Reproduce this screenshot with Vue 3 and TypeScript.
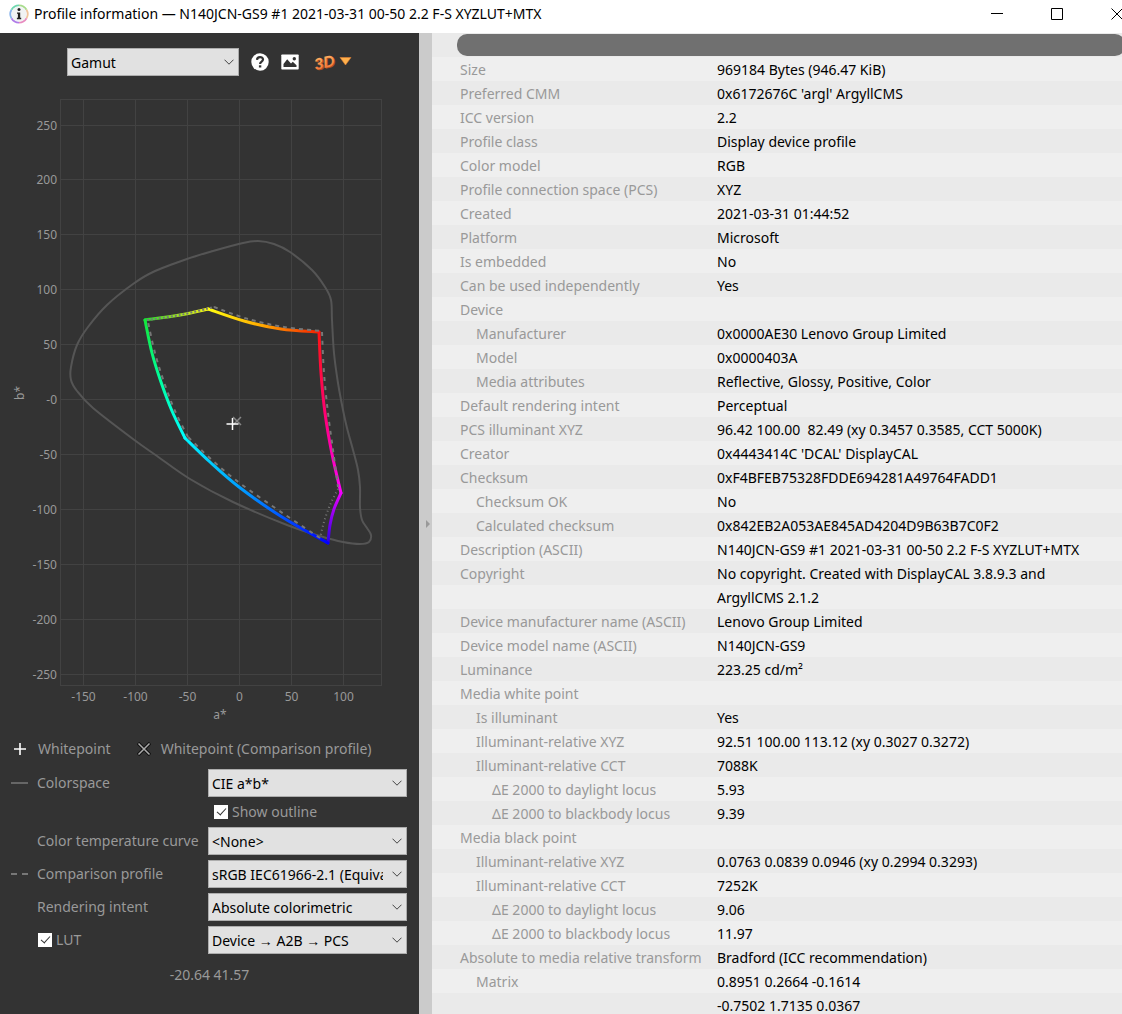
<script setup lang="ts">
import { ref } from 'vue'

type Point = [number, number]

interface Row {
  label: string
  value: string
  level?: number
}

const title = 'N140JCN-GS9 #1 2021-03-31 00-50 2.2 F-S XYZLUT+MTX'

const rows: Row[] = [
  { label: 'Size', value: '969184 Bytes (946.47 KiB)' },
  { label: 'Preferred CMM', value: "0x6172676C 'argl' ArgyllCMS" },
  { label: 'ICC version', value: '2.2' },
  { label: 'Profile class', value: 'Display device profile' },
  { label: 'Color model', value: 'RGB' },
  { label: 'Profile connection space (PCS)', value: 'XYZ' },
  { label: 'Created', value: '2021-03-31 01:44:52' },
  { label: 'Platform', value: 'Microsoft' },
  { label: 'Is embedded', value: 'No' },
  { label: 'Can be used independently', value: 'Yes' },
  { label: 'Device', value: '' },
  { label: 'Manufacturer', value: '0x0000AE30 Lenovo Group Limited', level: 1 },
  { label: 'Model', value: '0x0000403A', level: 1 },
  { label: 'Media attributes', value: 'Reflective, Glossy, Positive, Color', level: 1 },
  { label: 'Default rendering intent', value: 'Perceptual' },
  { label: 'PCS illuminant XYZ', value: '96.42 100.00  82.49 (xy 0.3457 0.3585, CCT 5000K)' },
  { label: 'Creator', value: "0x4443414C 'DCAL' DisplayCAL" },
  { label: 'Checksum', value: '0xF4BFEB75328FDDE694281A49764FADD1' },
  { label: 'Checksum OK', value: 'No', level: 1 },
  { label: 'Calculated checksum', value: '0x842EB2A053AE845AD4204D9B63B7C0F2', level: 1 },
  { label: 'Description (ASCII)', value: title },
  { label: 'Copyright', value: 'No copyright. Created with DisplayCAL 3.8.9.3 and ArgyllCMS 2.1.2' },
  { label: 'Device manufacturer name (ASCII)', value: 'Lenovo Group Limited' },
  { label: 'Device model name (ASCII)', value: 'N140JCN-GS9' },
  { label: 'Luminance', value: '223.25 cd/m²' },
  { label: 'Media white point', value: '' },
  { label: 'Is illuminant', value: 'Yes', level: 1 },
  { label: 'Illuminant-relative XYZ', value: '92.51 100.00 113.12 (xy 0.3027 0.3272)', level: 1 },
  { label: 'Illuminant-relative CCT', value: '7088K', level: 1 },
  { label: 'ΔE 2000 to daylight locus', value: '5.93', level: 2 },
  { label: 'ΔE 2000 to blackbody locus', value: '9.39', level: 2 },
  { label: 'Media black point', value: '' },
  { label: 'Illuminant-relative XYZ', value: '0.0763 0.0839 0.0946 (xy 0.2994 0.3293)', level: 1 },
  { label: 'Illuminant-relative CCT', value: '7252K', level: 1 },
  { label: 'ΔE 2000 to daylight locus', value: '9.06', level: 2 },
  { label: 'ΔE 2000 to blackbody locus', value: '11.97', level: 2 },
  { label: 'Absolute to media relative transform', value: 'Bradford (ICC recommendation)' },
  { label: 'Matrix', value: '0.8951 0.2664 -0.1614\n-0.7502 1.7135 0.0367', level: 1 },
]

// Axis ticks, mapped from a*b* values to plot coordinates.
const plot = { left: 60.5, right: 381.5, top: 99.5, bottom: 685.5 }
const xTicks = [-150, -100, -50, 0, 50, 100].map((v) => ({
  text: String(v),
  pos: Math.round(239 + v * 1.041) + 0.5,
}))
const yTicks = [250, 200, 150, 100, 50, 0, -50, -100, -150, -200, -250].map((v) => ({
  text: v === 0 ? '-0' : String(v),
  pos: Math.round(399 - v * 1.098) + 0.5,
}))

// Catmull-Rom spline through the given points.
function spline(p: Point[], closed = false): string {
  const n = p.length
  const at = (i: number): Point =>
    closed ? p[(i + n) % n] : p[Math.max(0, Math.min(n - 1, i))]
  let d = `M${p[0][0]} ${p[0][1]}`
  const count = closed ? n : n - 1
  for (let i = 0; i < count; i++) {
    const [a, b, c, e] = [at(i - 1), at(i), at(i + 1), at(i + 2)]
    d += ` C${b[0] + (c[0] - a[0]) / 6} ${b[1] + (c[1] - a[1]) / 6}`
    d += ` ${c[0] - (e[0] - b[0]) / 6} ${c[1] - (e[1] - b[1]) / 6} ${c[0]} ${c[1]}`
  }
  return closed ? d + 'Z' : d
}

const locus = spline(
  [
    [258, 241], [274, 244], [290, 252], [312, 270], [325, 287], [331, 300], [332, 320],
    [334, 353], [338, 383], [343, 410], [347, 428], [353, 450], [358, 470], [360, 487],
    [360, 507], [362, 520], [367, 528], [371, 535], [369, 542], [360, 544], [343, 542],
    [320, 536], [287, 525], [233, 502], [190, 479], [157, 456], [133, 439], [93, 408],
    [77, 391], [71, 380], [71, 367], [77, 345], [88, 327], [107, 305], [133, 284],
    [153, 272], [187, 259], [213, 251], [243, 243],
  ],
  true,
)

const edges = [
  { id: 'gy', pts: [[145, 320], [180, 315], [208, 309]], stops: ['#1fdc32', '#9be61e', '#f5f514'] },
  { id: 'yr', pts: [[208, 309], [244, 321], [281, 329], [319, 332]], stops: ['#ffff10', '#ffa800', '#f52000'] },
  { id: 'rm', pts: [[319, 332], [321, 373], [325, 413], [332, 454], [341, 493]], stops: ['#ff1414', '#ff0070', '#ff00ff'] },
  { id: 'mb', pts: [[341, 493], [334, 509], [330, 525], [328, 543]], stops: ['#f000ff', '#8a00f0', '#2a00e8'] },
  { id: 'bc', pts: [[328, 543], [282, 517], [239, 487], [210, 462], [185, 438]], stops: ['#0000ff', '#008cff', '#00f5ff'] },
  { id: 'cg', pts: [[185, 438], [172, 411], [161, 382], [152, 353], [145, 320]], stops: ['#00ffff', '#00ffa0', '#14e63c'] },
].map((e) => {
  const pts = e.pts as Point[]
  return { ...e, d: spline(pts), from: pts[0], to: pts[pts.length - 1] }
})

const comparison = [
  { dash: '2 2', d: spline([[147, 320], [180, 315], [214, 307]]) },
  { dash: '4 4', d: spline([[214, 307], [248, 319], [284, 327], [321, 331]]) },
  { dash: '4 5', d: spline([[322, 332], [324, 373], [328, 413], [333, 450], [338, 487]]) },
  { dash: '1 3', d: spline([[338, 489], [330, 505], [324, 522], [320, 538]]) },
  { dash: '4 5', d: spline([[320, 538], [284, 514], [241, 484], [213, 461], [188, 437]]) },
  { dash: '4 5', d: spline([[188, 437], [175, 411], [164, 382], [155, 353], [148, 322]]) },
]

const showOutline = ref(true)
const lut = ref(true)
</script>

<template>
  <div class="window">
    <header class="titlebar">
      <svg class="app-icon" width="20" height="20" viewBox="0 0 20 20" aria-hidden="true">
        <g fill="none" stroke-width="2">
          <path d="M10 1.400A8.600 8.600 0 0 1 17.450 5.700" stroke="#a8dc8c" />
          <path d="M17.450 5.700A8.600 8.600 0 0 1 17.450 14.300" stroke="#f0c49c" />
          <path d="M17.450 14.300A8.600 8.600 0 0 1 10 18.600" stroke="#e88cc0" />
          <path d="M10 18.600A8.600 8.600 0 0 1 2.550 14.300" stroke="#b07ce8" />
          <path d="M2.550 14.300A8.600 8.600 0 0 1 2.550 5.700" stroke="#88b4ec" />
          <path d="M2.550 5.700A8.600 8.600 0 0 1 10 1.400" stroke="#70d8b0" />
        </g>
        <circle cx="10" cy="10" r="7.700" fill="#f1f3f4" />
        <circle cx="10" cy="5.600" r="1.500" fill="#222" />
        <path d="M8 8.400h3.200v5.400h1v1.400H7.900v-1.400h1V9.800H8z" fill="#222" />
      </svg>
      <h1>Profile information — {{ title }}</h1>
      <div class="controls">
        <button type="button" aria-label="Minimize">
          <svg width="12" height="12" viewBox="0 0 12 12"><path d="M0 5.500h12" stroke="#000" /></svg>
        </button>
        <button type="button" aria-label="Maximize">
          <svg width="12" height="12" viewBox="0 0 12 12"><path d="M.5 .5h11v11H.5z" fill="none" stroke="#000" /></svg>
        </button>
        <button type="button" aria-label="Close">
          <svg width="12" height="12" viewBox="0 0 12 12"><path d="M.5 .5l11 11M11.500 .5l-11 11" stroke="#000" /></svg>
        </button>
      </div>
    </header>

    <main class="split">
      <section class="gamut">
        <div class="toolbar">
          <div class="combo view">
            <select aria-label="View"><option>Gamut</option></select>
            <svg width="10" height="6" viewBox="0 0 10 6"><path d="M.5 .7L5 5.200L9.500 .7" /></svg>
          </div>
          <button type="button" aria-label="Help">
            <svg width="18" height="18" viewBox="0 0 18 18">
              <circle cx="9" cy="9" r="8.700" fill="#fff" />
              <path d="M6 6.900C6.100 3.200 12 3.200 12 6.600C12 8.700 9.100 8.700 9.100 11" fill="none" stroke="#333" stroke-width="2.200" />
              <path d="M7.900 12.300h2.400v2.200H7.900z" fill="#333" />
            </svg>
          </button>
          <button type="button" aria-label="Save as image">
            <svg width="18" height="16" viewBox="0 0 18 16">
              <path d="M1 .5h16q.7 0 .7.7v13.600q0 .7-.7.7H1q-.7 0-.7-.7V1.200Q.3.500 1 .5z" fill="#fff" />
              <path d="M2.500 13V10L6.200 5.300L10 9.600L11.800 7.800L15.500 11.200V13z" fill="#333" />
              <circle cx="13.300" cy="4.700" r="1.700" fill="#333" />
            </svg>
          </button>
          <button type="button" class="three-d" aria-label="View 3D gamut">
            <svg width="38" height="24" viewBox="0 0 38 24">
              <defs>
                <linearGradient id="amber" x1="0" y1="0" x2="0" y2="1">
                  <stop offset="0" stop-color="#ffb868" />
                  <stop offset="1" stop-color="#f06c34" />
                </linearGradient>
              </defs>
              <g transform="rotate(-12 10 12)" class="logo">
                <text x="1" y="19" fill="#a8501f">3D</text>
                <text x="0" y="18" fill="url(#amber)">3D</text>
              </g>
              <path d="M26 7.500h11l-5.500 7.500z" fill="#ffb04c" stroke="#e07f30" stroke-width=".6" />
            </svg>
          </button>
        </div>

        <svg class="chart" viewBox="0 76 419 657" role="img" aria-label="Gamut plot, CIE a*b*">
          <defs>
            <linearGradient
              v-for="e in edges" :id="e.id" :key="e.id" gradientUnits="userSpaceOnUse"
              :x1="e.from[0]" :y1="e.from[1]" :x2="e.to[0]" :y2="e.to[1]"
            >
              <stop v-for="(s, i) in e.stops" :key="i" :offset="i / 2" :stop-color="s" />
            </linearGradient>
          </defs>

          <g class="grid">
            <rect
              :x="plot.left" :y="plot.top"
              :width="plot.right - plot.left" :height="plot.bottom - plot.top"
            />
            <path v-for="t in xTicks" :key="t.text" :d="`M${t.pos} ${plot.top}V${plot.bottom}`" />
            <path v-for="t in yTicks" :key="t.text" :d="`M${plot.left} ${t.pos}H${plot.right}`" />
          </g>

          <g class="ticks">
            <text v-for="t in yTicks" :key="t.text" x="57" :y="t.pos + 4" text-anchor="end">{{ t.text }}</text>
            <text v-for="t in xTicks" :key="t.text" :x="t.pos" y="701" text-anchor="middle">{{ t.text }}</text>
            <text x="220" y="719" text-anchor="middle">a*</text>
            <text transform="translate(24 393) rotate(-90)" text-anchor="middle">b*</text>
          </g>

          <path v-if="showOutline" class="locus" :d="locus" />
          <path v-for="e in edges" :key="e.id" class="edge" :d="e.d" :stroke="`url(#${e.id})`" />
          <path
            v-for="(c, i) in comparison" :key="i" class="comparison"
            :d="c.d" :stroke-dasharray="c.dash"
          />
          <path d="M233 417l8 8M241 417l-8 8" stroke="#888" stroke-width="1.500" />
          <path d="M232.500 418v12M226.500 424h12" stroke="#fff" stroke-width="1.500" />
        </svg>

        <div class="legend">
          <span class="key">
            <svg width="12" height="12" viewBox="0 0 12 12"><path d="M6 0v12M0 6h12" stroke="#fff" stroke-width="1.600" /></svg>
            Whitepoint
          </span>
          <span class="key">
            <svg width="14" height="14" viewBox="0 0 14 14">
              <path d="M1 1l12 12M13 1L1 13" stroke="#111" stroke-width="3.500" />
              <path d="M1.500 1.500l11 11M12.500 1.500l-11 11" stroke="#aaa" stroke-width="1.500" />
            </svg>
            Whitepoint (Comparison profile)
          </span>
        </div>

        <form class="options" @submit.prevent>
          <svg class="swatch" width="17" height="2"><path d="M0 1h17" stroke="#666" stroke-width="2" /></svg>
          <label for="space">Colorspace</label>
          <div class="combo">
            <select id="space"><option>CIE a*b*</option></select>
            <svg width="10" height="6" viewBox="0 0 10 6"><path d="M.5 .7L5 5.200L9.500 .7" /></svg>
          </div>

          <label class="check outline">
            <input v-model="showOutline" type="checkbox" />Show outline
          </label>

          <label class="wide" for="curve">Color temperature curve</label>
          <div class="combo">
            <select id="curve"><option>&lt;None&gt;</option></select>
            <svg width="10" height="6" viewBox="0 0 10 6"><path d="M.5 .7L5 5.200L9.500 .7" /></svg>
          </div>

          <svg class="swatch" width="17" height="2"><path d="M0 1h6M11 1h6" stroke="#777" stroke-width="2" /></svg>
          <label for="comparison">Comparison profile</label>
          <div class="combo">
            <select id="comparison"><option>sRGB IEC61966-2.1 (Equivalent)</option></select>
            <svg width="10" height="6" viewBox="0 0 10 6"><path d="M.5 .7L5 5.200L9.500 .7" /></svg>
          </div>

          <label class="wide" for="intent">Rendering intent</label>
          <div class="combo">
            <select id="intent"><option>Absolute colorimetric</option></select>
            <svg width="10" height="6" viewBox="0 0 10 6"><path d="M.5 .7L5 5.200L9.500 .7" /></svg>
          </div>

          <label class="check wide"><input v-model="lut" type="checkbox" />LUT</label>
          <div class="combo">
            <select aria-label="LUT direction"><option>Device → A2B → PCS</option></select>
            <svg width="10" height="6" viewBox="0 0 10 6"><path d="M.5 .7L5 5.200L9.500 .7" /></svg>
          </div>
        </form>

        <p class="readout">-20.64 41.57</p>
      </section>

      <div class="sash">
        <svg width="4" height="8" viewBox="0 0 4 8"><path d="M0 0l4 4l-4 4z" fill="#999" /></svg>
      </div>

      <section class="details">
        <table>
          <tbody>
            <tr>
              <td colspan="2" class="hidden-row"><div class="bar"></div></td>
            </tr>
            <tr v-for="(r, i) in rows" :key="i">
              <th scope="row" :class="`level-${r.level ?? 0}`">{{ r.label }}</th>
              <td>{{ r.value }}</td>
            </tr>
          </tbody>
        </table>
      </section>
    </main>
  </div>
</template>

<style>
body {
  margin: 0;
}
</style>

<style scoped>
.window {
  display: flex;
  flex-direction: column;
  height: 100vh;
  overflow: hidden;
  font: 14px/24px "Noto Sans", "Open Sans", sans-serif;
  color: #000;
  background: #fff;
}

button {
  display: flex;
  align-items: center;
  justify-content: center;
  padding: 0;
  border: 0;
  background: none;
}

.titlebar {
  flex: none;
  display: flex;
  align-items: center;
  height: 33px;
  padding-left: 9px;
  overflow: hidden;
}

.app-icon {
  flex: none;
  margin: 0 5px 6px 0;
}

.titlebar h1 {
  margin: 0;
  padding-bottom: 5px;
  font-size: 14px;
  font-weight: 400;
  white-space: nowrap;
}

.controls {
  display: flex;
  margin: 0 -25px 5px auto;
}

.controls button {
  width: 60px;
  height: 28px;
}

.split {
  flex: 1;
  display: flex;
  min-height: 0;
}

.gamut {
  flex: none;
  width: 419px;
  box-sizing: border-box;
  padding-top: 15px;
  color: #999;
  background: #333;
}

.toolbar {
  display: flex;
  align-items: center;
  height: 28px;
  padding-left: 67px;
}

.toolbar button {
  margin-left: 12px;
}

.toolbar .three-d {
  margin-left: 15px;
}

.logo {
  font: italic bold 16px "Liberation Sans", sans-serif;
}

.combo {
  position: relative;
  height: 28px;
}

.combo.view {
  width: 172px;
}

.combo select {
  appearance: none;
  width: 100%;
  height: 28px;
  padding: 1px 23px 0 3px;
  border: 1px solid #adadad;
  border-radius: 0;
  font: inherit;
  color: #000;
  background: #e1e1e1;
}

.combo svg {
  position: absolute;
  top: 11px;
  right: 5px;
  fill: none;
  stroke: #444;
  pointer-events: none;
}

.chart {
  display: block;
  width: 100%;
}

.grid {
  fill: none;
  stroke: #424242;
}

.ticks {
  font-size: 12px;
  fill: #999;
}

.locus {
  fill: none;
  stroke: #555;
  stroke-width: 2;
}

.edge {
  fill: none;
  stroke-width: 3;
  stroke-linecap: round;
}

.comparison {
  fill: none;
  stroke: #777;
  stroke-width: 2;
}

.legend {
  display: flex;
  gap: 26px;
  padding: 4px 0 8px 14px;
}

.key {
  display: flex;
  align-items: center;
  gap: 12px;
}

.key + .key {
  gap: 10px;
}

.options {
  display: grid;
  grid-template-columns: 27px 171px 1fr;
  row-gap: 5px;
  align-items: center;
  padding: 0 12px 0 10px;
}

.swatch {
  grid-column: 1;
  margin-left: 1px;
}

.wide {
  grid-column: 2;
}

.check {
  display: flex;
  align-items: center;
  gap: 4px;
}

.outline {
  grid-column: 3;
  padding-left: 5px;
  height: 20px;
}

.check input {
  appearance: none;
  position: relative;
  width: 14px;
  height: 14px;
  margin: 0 0 0 1px;
  background: #fff;
}

.check input:checked::after {
  content: "";
  position: absolute;
  left: 5px;
  top: 1px;
  width: 4px;
  height: 8px;
  border: solid #333;
  border-width: 0 1px 1px 0;
  transform: rotate(42deg);
}

.readout {
  margin: 9px 0 0;
  text-align: center;
}

.sash {
  flex: none;
  display: flex;
  align-items: center;
  justify-content: center;
  width: 13px;
  padding-left: 4px;
  box-sizing: border-box;
  background: #cbcbcb;
}

.details {
  flex: 1;
  min-width: 0;
  overflow: hidden;
  background: #efefef;
}

table {
  width: 100%;
  border-collapse: collapse;
  background: repeating-linear-gradient(#eaeaea 0 24px, #efefef 24px 48px);
}

th,
td {
  padding: 0;
  font-weight: 400;
  text-align: left;
  vertical-align: top;
}

th {
  width: 257px;
  padding-left: 28px;
  color: #999;
  white-space: nowrap;
}

th.level-1 {
  padding-left: 44px;
  width: 241px;
}

th.level-2 {
  padding-left: 60px;
  width: 225px;
}

td {
  height: 24px;
  padding-right: 16px;
  white-space: pre-wrap;
}

.hidden-row {
  padding: 0 0 0 25px;
}

.bar {
  height: 22px;
  margin: 1px -3px 2px 0;
  border-radius: 10px;
  background: #707070;
}
</style>
